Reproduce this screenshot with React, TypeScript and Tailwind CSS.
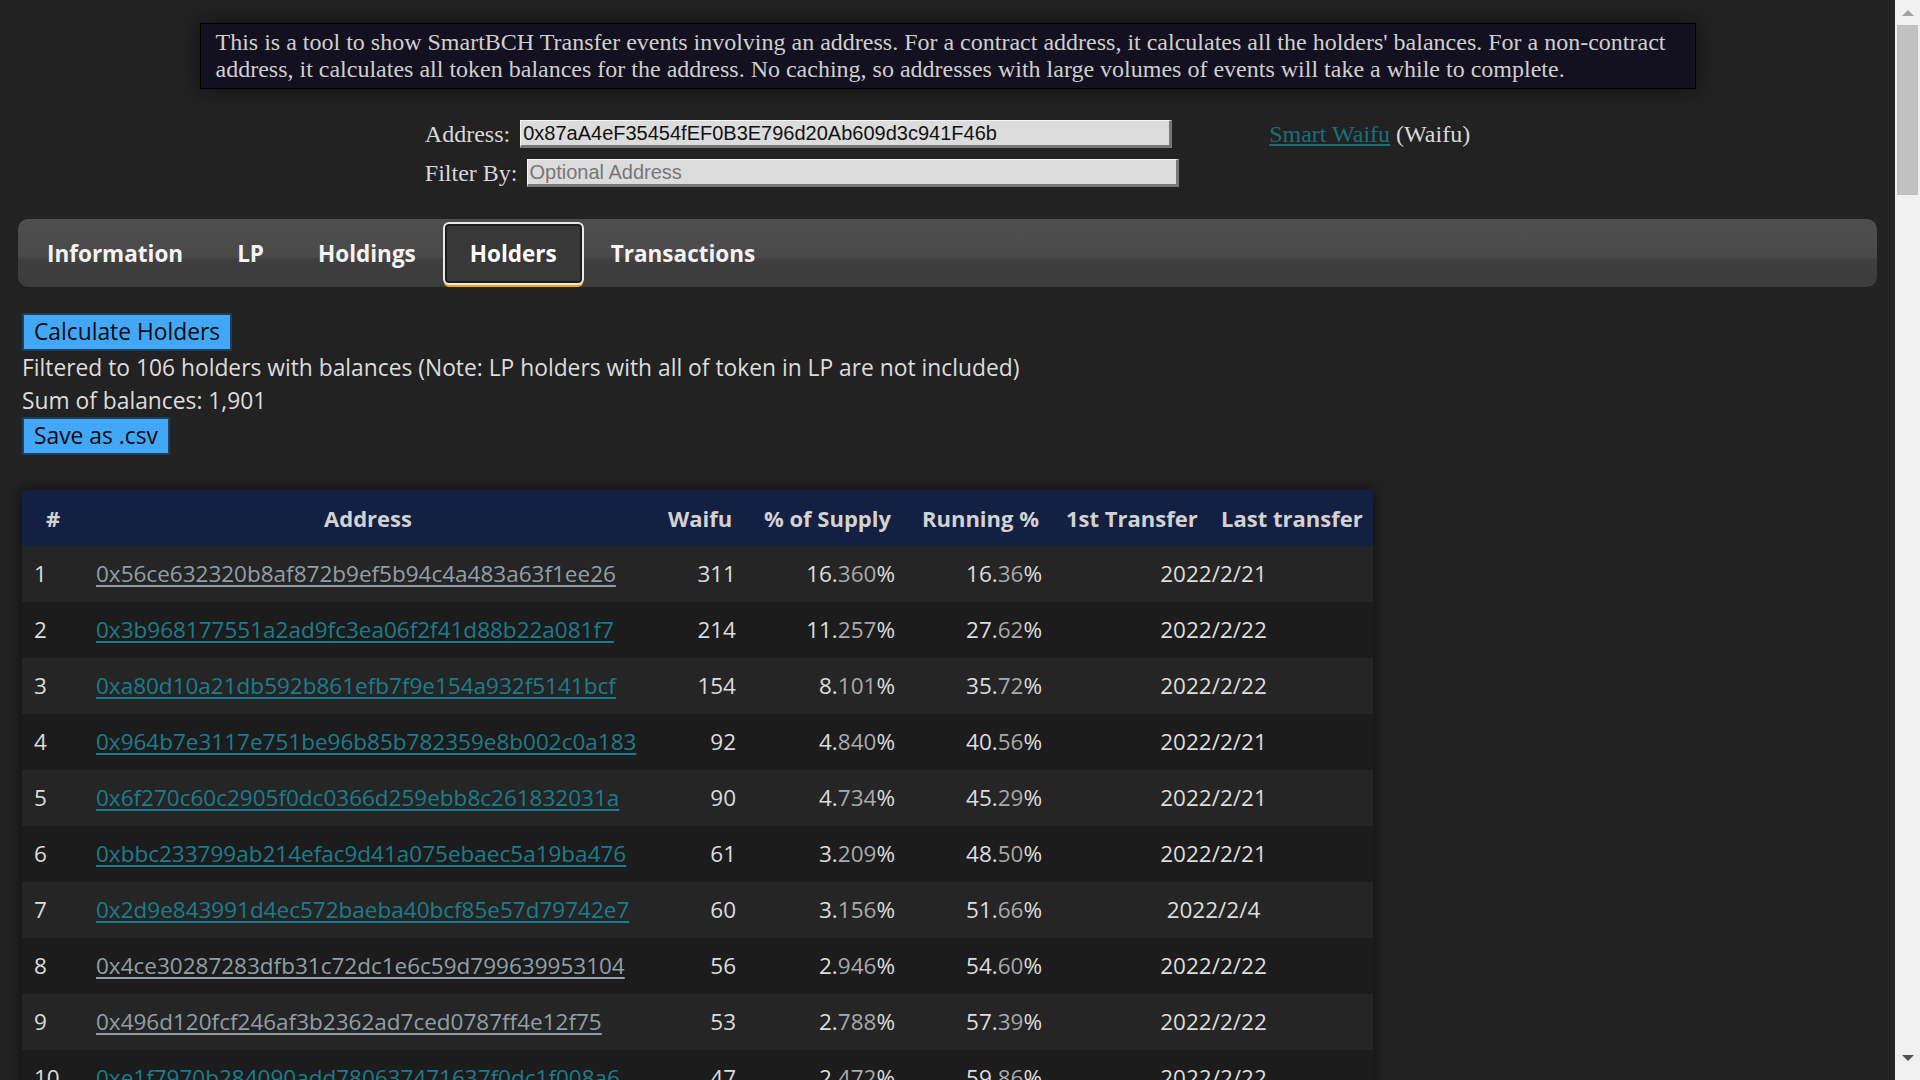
import React from "react";

type Holder = {
  address: string;
  amount: string;
  supply: [string, string];
  running: [string, string];
  date: string;
  visited?: boolean;
};

const holders: Holder[] = [
  { address: "0x56ce632320b8af872b9ef5b94c4a483a63f1ee26", amount: "311", supply: ["16.", "360"], running: ["16.", "36"], date: "2022/2/21", visited: true },
  { address: "0x3b968177551a2ad9fc3ea06f2f41d88b22a081f7", amount: "214", supply: ["11.", "257"], running: ["27.", "62"], date: "2022/2/22" },
  { address: "0xa80d10a21db592b861efb7f9e154a932f5141bcf", amount: "154", supply: ["8.", "101"], running: ["35.", "72"], date: "2022/2/22" },
  { address: "0x964b7e3117e751be96b85b782359e8b002c0a183", amount: "92", supply: ["4.", "840"], running: ["40.", "56"], date: "2022/2/21" },
  { address: "0x6f270c60c2905f0dc0366d259ebb8c261832031a", amount: "90", supply: ["4.", "734"], running: ["45.", "29"], date: "2022/2/21" },
  { address: "0xbbc233799ab214efac9d41a075ebaec5a19ba476", amount: "61", supply: ["3.", "209"], running: ["48.", "50"], date: "2022/2/21" },
  { address: "0x2d9e843991d4ec572baeba40bcf85e57d79742e7", amount: "60", supply: ["3.", "156"], running: ["51.", "66"], date: "2022/2/4" },
  { address: "0x4ce30287283dfb31c72dc1e6c59d799639953104", amount: "56", supply: ["2.", "946"], running: ["54.", "60"], date: "2022/2/22", visited: true },
  { address: "0x496d120fcf246af3b2362ad7ced0787ff4e12f75", amount: "53", supply: ["2.", "788"], running: ["57.", "39"], date: "2022/2/22", visited: true },
  { address: "0xe1f7970b284090add780637471637f0dc1f008a6", amount: "47", supply: ["2.", "472"], running: ["59.", "86"], date: "2022/2/22" },
];

const tabs = ["Information", "LP", "Holdings", "Holders", "Transactions"];

const Percent = ({ value }: { value: [string, string] }) => (
  <span>
    {value[0]}
    <span className="text-[#a9a9a9]">{value[1]}</span>%
  </span>
);

const Scrollbar = () => (
  <div className="w-[25px] shrink-0 bg-[#f1f1f1] flex flex-col items-center">
    <div className="h-[25px] flex items-center justify-center">
      <div className="w-0 h-0 border-l-[6px] border-r-[6px] border-b-[6px] border-l-transparent border-r-transparent border-b-[#a3a3a3]" />
    </div>
    <div className="w-[21px] h-[170px] bg-[#c1c1c1]" />
    <div className="flex-1" />
    <div className="h-[28px] flex items-start justify-center pt-[3px]">
      <div className="w-0 h-0 border-l-[6px] border-r-[6px] border-t-[6px] border-l-transparent border-r-transparent border-t-[#505050]" />
    </div>
  </div>
);

export default function App() {
  return (
    <div className="flex h-screen overflow-hidden bg-[#222222] text-[#dddddd] font-['Open_Sans',sans-serif]">
      <div className="flex-1 min-w-0 overflow-hidden">
        <div className="mx-auto mt-[23px] w-[1496px] bg-[#13101f] border border-black px-[15px] py-[5px] shadow-[0_0_22px_rgba(0,0,0,0.55)] font-['Liberation_Serif',serif] text-[24px] leading-[27px] text-[#cfcfcf]">
          This is a tool to show SmartBCH Transfer events involving an address. For a contract address, it calculates all the
          holders' balances. For a non-contract address, it calculates all token balances for the address. No caching, so
          addresses with large volumes of events will take a while to complete.
        </div>

        <div className="mt-[31px] flex justify-center font-['Liberation_Serif',serif] text-[24px] leading-[28px] text-[#d8d8d8]">
          <div className="flex flex-col gap-[11px]">
            <div className="flex items-center h-[28px]">
              <span className="mr-[10px]">Address:</span>
              <input
                readOnly
                value="0x87aA4eF35454fEF0B3E796d20Ab609d3c941F46b"
                className="w-[652px] h-[28px] bg-[#dcdcdc] border-t border-l border-t-[#f4f4f4] border-l-[#f4f4f4] border-b-[3px] border-r-[3px] border-b-[#777] border-r-[#777] px-[2px] font-['Liberation_Sans',sans-serif] text-[20px] leading-[24px] text-[#111] outline-none"
              />
              <a href="#" className="ml-[97px] text-[#1a6f7c] underline decoration-[#1a6f7c]">
                Smart Waifu
              </a>
              <span className="ml-[6px]">(Waifu)</span>
            </div>
            <div className="flex items-center h-[28px]">
              <span className="mr-[9px]">Filter By:</span>
              <input
                placeholder="Optional Address"
                className="w-[652px] h-[28px] bg-[#dcdcdc] border-t border-l border-t-[#f4f4f4] border-l-[#f4f4f4] border-b-[3px] border-r-[3px] border-b-[#777] border-r-[#777] px-[2px] font-['Liberation_Sans',sans-serif] text-[20px] leading-[24px] text-[#111] placeholder:text-[#777] outline-none"
              />
            </div>
          </div>
        </div>

        <div className="mx-[18px] mt-[32px] h-[68px] rounded-[10px] bg-[linear-gradient(180deg,#4e4e4e_0%,#4a4a4a_55%,#3f3f3f_60%,#3c3c3c_100%)] flex items-start pt-[3px] pl-[2px]">
          {tabs.map((t) => (
            <div
              key={t}
              className={
                t === "Holders"
                  ? "h-[63px] px-[25px] flex items-center rounded-[6px] border-2 border-[#e8e8e8] bg-[#383838] shadow-[inset_0_0_0_2px_#1c1c1c,0_3px_0_-1px_#f5a21b] text-[22.5px] font-bold text-white"
                  : "h-[63px] px-[27px] flex items-center text-[22.5px] font-bold text-[#f4f4f4]"
              }
            >
              {t}
            </div>
          ))}
        </div>

        <div className="px-[22px] pt-[26px]">
          <button className="h-[38px] px-[10px] bg-[#42a7f7] border-2 border-[#1d3f5c] text-[22.8px] text-[#0b0b0b] leading-none">
            Calculate Holders
          </button>
          <p className="text-[22.8px] leading-[33px]">
            Filtered to 106 holders with balances (Note: LP holders with all of token in LP are not included)
          </p>
          <p className="text-[22.8px] leading-[33px]">Sum of balances: 1,901</p>
          <button className="h-[38px] px-[10px] bg-[#42a7f7] border-2 border-[#1d3f5c] text-[22.8px] text-[#0b0b0b] leading-none">
            Save as .csv
          </button>

          <table className="mt-[35px] w-[1351px] table-fixed border-collapse shadow-[0_0_14px_rgba(0,0,0,0.6)] text-[22.5px]">
            <colgroup>
              <col className="w-[62px]" />
              <col className="w-[568px]" />
              <col className="w-[96px]" />
              <col className="w-[159px]" />
              <col className="w-[147px]" />
              <col className="w-[155px]" />
              <col className="w-[164px]" />
            </colgroup>
            <thead>
              <tr className="h-[56px] bg-[#132042] text-[#d2d2d2] font-bold text-[22px]">
                <th className="px-[12px] text-center">#</th>
                <th className="px-[12px] text-center">Address</th>
                <th className="px-[12px] text-center">Waifu</th>
                <th className="px-[12px] text-center">% of Supply</th>
                <th className="px-[12px] text-center">Running %</th>
                <th className="px-[12px] text-center whitespace-nowrap">1st Transfer</th>
                <th className="px-[12px] text-center whitespace-nowrap">Last transfer</th>
              </tr>
            </thead>
            <tbody>
              {holders.map((h, i) => (
                <tr key={h.address} className={i % 2 === 0 ? "h-[56px] bg-[#252525]" : "h-[56px] bg-[#1c1c1c]"}>
                  <td className="px-[12px]">{i + 1}</td>
                  <td className="px-[12px]">
                    <a
                      href="#"
                      className={
                        h.visited
                          ? "text-[#919fa8] underline underline-offset-[3px]"
                          : "text-[#1a7d8d] underline underline-offset-[3px]"
                      }
                    >
                      {h.address}
                    </a>
                  </td>
                  <td className="px-[12px] text-right">{h.amount}</td>
                  <td className="px-[12px] text-right">
                    <Percent value={h.supply} />
                  </td>
                  <td className="px-[12px] text-right">
                    <Percent value={h.running} />
                  </td>
                  <td colSpan={2} className="px-[12px] text-center">
                    {h.date}
                  </td>
                </tr>
              ))}
            </tbody>
          </table>
        </div>
      </div>
      <Scrollbar />
    </div>
  );
}
